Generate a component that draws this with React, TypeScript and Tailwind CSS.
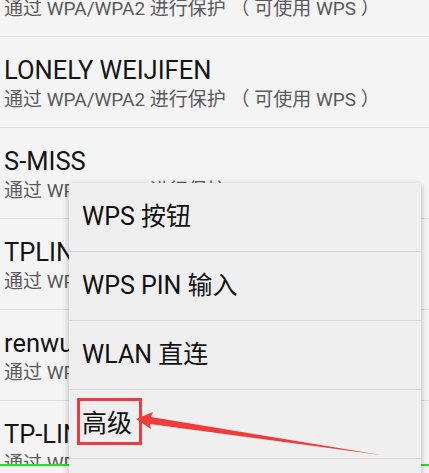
import React from "react";

const SUB = "通过 WPA/WPA2 进行保护 （ 可使用 WPS ）";

const rows: { t: string; s: string; clip?: boolean }[] = [
  { t: "ChinaNet-8F2A", s: SUB },
  { t: "LONELY WEIJIFEN", s: SUB },
  { t: "S-MISS", s: "通过 WPA/WPA2 进行保护" },
  { t: "TPLINK_3C8E", s: SUB, clip: true },
  { t: "renwu", s: SUB, clip: true },
  { t: "TP-LINK_6A1F", s: SUB, clip: true },
];

const items = ["WPS 按钮", "WPS PIN 输入", "WLAN 直连", "高级", ""];

export default function App() {
  return (
    <div
      className="relative w-[429px] h-[473px] overflow-hidden bg-[#f4f4f4]"
      style={{ fontFamily: "Roboto, 'Noto Sans CJK SC', sans-serif" }}
    >
      <div className="-mt-[54px] flex flex-col">
        {rows.map((r, i) => (
          <div
            key={i}
            className="h-[91px] shrink-0 border-b border-[#dcdcdc] pl-[4px] pt-[18px] flex flex-col"
          >
            <div className={r.clip ? "w-[65px] overflow-hidden" : ""}>
              <div className="text-[25.5px] leading-[30px] text-[#141414] whitespace-nowrap">
                {r.t}
              </div>
              <div className="mt-[3px] text-[19px] leading-[24px] text-[#5a5a5a] whitespace-nowrap">
                {r.s}
              </div>
            </div>
          </div>
        ))}
      </div>

      {/* bottom strip with green line */}
      <div className="absolute left-0 right-0 top-[464px] bottom-0 bg-[#f4f4f4] border-t-[2px] border-[#22e022]" />

      {/* popup menu */}
      <div className="absolute left-[69px] top-[183px] w-[352px] h-[320px] bg-[#efefef] rounded-[2px] shadow-[0_2px_6px_rgba(0,0,0,0.28)] flex flex-col">
        {items.map((it, i) => (
          <div
            key={i}
            className="h-[69px] shrink-0 border-b border-[#d6d6d6] flex items-center pl-[13px] text-[25px] text-[#111111] whitespace-nowrap"
          >
            {it}
          </div>
        ))}
      </div>

      {/* red highlight box */}
      <div className="absolute left-[77px] top-[398px] w-[65px] h-[47px] border-[3px] border-[#f23a3a]" />

      {/* red arrow */}
      <svg
        className="absolute left-0 top-0 pointer-events-none"
        width="429"
        height="473"
        viewBox="0 0 429 473"
      >
        <polygon
          points="136,419 153,412 151,417 381,455 150,424 151,429"
          fill="#f23a3a"
        />
      </svg>
    </div>
  );
}
